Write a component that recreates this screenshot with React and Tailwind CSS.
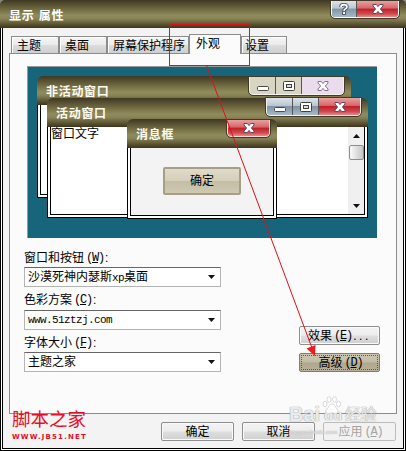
import clsx from "clsx";

const bar =
  "bg-[linear-gradient(180deg,#3f3823_0%,#5a5334_18%,#7b7548_40%,#8f8b5e_55%,#898557_66%,#655f3a_82%,#3d331c_100%)]";
const red =
  "bg-[linear-gradient(180deg,#e9a0a0_0%,#d96468_45%,#bd2028_50%,#d04a50_80%,#ef8585_100%)]";
const blue =
  "bg-[linear-gradient(180deg,#dde4ea_0%,#b9c6d1_45%,#8194a4_50%,#a8bac8_100%)]";

const CloseGlyph = ({ stroke = "#5c4a5e" }) => (
  <svg width="12" height="10" viewBox="0 0 12 10">
    <path
      d="M1 .5h3.3L6 2.6 7.7.5H11V2L8.4 5 11 8v1.5H7.7L6 7.4 4.3 9.5H1V8l2.6-3L1 2z"
      fill="#fff"
      stroke={stroke}
    />
  </svg>
);

const MinGlyph = () => (
  <svg width="12" height="10" viewBox="0 0 12 10">
    <rect x=".5" y="5.5" width="11" height="4" rx="1" fill="#fff" stroke="#4a4a45" />
  </svg>
);

const MaxGlyph = () => (
  <svg width="12" height="10" viewBox="0 0 12 10">
    <rect x=".5" y=".5" width="11" height="9" rx="1" fill="#fff" stroke="#3f3f3c" />
    <rect x="3.5" y="3.5" width="5" height="3" fill="#ddd" stroke="#3f3f3c" />
  </svg>
);

const Triangle = ({ up = false }) => (
  <svg width="7" height="4" viewBox="0 0 7 4" className={clsx("shrink-0", up && "rotate-180")}>
    <path d="M0 0h7L3.5 4z" fill="#111" />
  </svg>
);

const Controls = ({ inactive = false }) => (
  <div
    className={clsx(
      "flex h-[18px] w-[95px] overflow-hidden rounded-b-[4px] border border-t-0 border-[#f4f1ee] outline outline-[#403a28]",
      inactive ? "bg-[#d8d5c3]" : blue
    )}>
    <div className="flex w-[26px] items-center justify-center border-r border-[#555]">
      <MinGlyph />
    </div>
    <div className="flex w-[26px] items-center justify-center border-r border-[#555]">
      <MaxGlyph />
    </div>
    <div className={clsx("flex flex-1 items-center justify-center", inactive ? "bg-[#eadced]" : red)}>
      <CloseGlyph stroke={inactive ? "#85738b" : "#5c4a5e"} />
    </div>
  </div>
);

const Tab = ({ children, className }) => (
  <div
    className={clsx(
      "h-[17px] whitespace-nowrap border border-b-0 border-[#8c8c8c] bg-[linear-gradient(180deg,#f5f5f5_0%,#ebebeb_48%,#dcdcdc_52%,#cfcfcf_100%)] leading-[18px] shadow-[inset_1px_1px_#fff]",
      className
    )}>
    {children}
  </div>
);

const Latin = ({ children }) => (
  <span className="font-['Liberation_Mono',monospace] text-[11px] tracking-[-0.6px]">
    {children}
  </span>
);

const Key = ({ children }) => (
  <span className="ml-[2px] mr-[-2px] font-['Liberation_Mono',monospace] text-[12px] tracking-[-1.2px]">
    (<u>{children}</u>)
  </span>
);

const Field = ({ label, hotkey, children }) => (
  <div>
    <div className="flex h-[18px] items-center whitespace-nowrap pb-[1px]">
      {label}
      <Key>{hotkey}</Key>
      <span className="ml-[3px]">:</span>
    </div>
    <div className="flex h-[20px] w-[197px] items-center justify-between border border-[#b4b4b4] border-t-[#666] bg-white pl-[3px] pr-[5px]">
      <span className="whitespace-nowrap leading-[16px]">{children}</span>
      <Triangle />
    </div>
  </div>
);

const Button = ({ children, className }) => (
  <button
    className={clsx(
      "flex h-[19px] items-center justify-center whitespace-nowrap rounded-[2px] border leading-none",
      className
    )}>
    {children}
  </button>
);

const normal =
  "border-[#8e8e8e] bg-[linear-gradient(180deg,#f4f4f4_0%,#ededed_48%,#dedede_52%,#d0d0d0_100%)] shadow-[inset_0_0_0_1px_#fafafa]";

const MiniWindow = ({ title, className, bodyClass, children }) => (
  <div className={clsx("absolute flex flex-col", className)}>
    <div className={clsx("h-[29px] shrink-0 rounded-t-[6px] pl-[9px] pt-[8px]", bar)}>
      <span className="block text-[12px] font-bold leading-[16px] tracking-[0.7px] text-[#fdfbf0]">
        {title}
      </span>
    </div>
    <div className="flex flex-1 border border-t-0 border-black bg-white px-[2px] pb-[2px]">
      <div className={clsx("flex flex-1 border border-t-0 border-black", bodyClass)}>
        {children}
      </div>
    </div>
  </div>
);

const Preview = () => (
  <div className="relative h-[172px] w-[350px] overflow-hidden border-l border-t border-[#999] bg-[#16657a]">
    <MiniWindow title="非活动窗口" className="left-[9px] top-[9px] h-[122px] w-[314px]" />
    <div className="absolute left-[221px] top-[10px]">
      <Controls inactive />
    </div>

    <MiniWindow
      title="活动窗口"
      className="left-[19px] top-[31px] h-[120px] w-[321px]"
      bodyClass="justify-between">
      <span className="leading-[15px]">窗口文字</span>
      <div className="flex w-[16px] flex-col items-center bg-[#f0f0f0] pb-[6px] pt-[7px]">
        <Triangle up />
        <div className="mt-[7px] h-[15px] w-[15px] shrink-0 rounded-[2px] border border-[#8d8d8d] bg-[linear-gradient(90deg,#fafafa,#c4c4c4)]" />
        <div className="flex-1" />
        <Triangle />
      </div>
    </MiniWindow>
    <div className="absolute left-[238px] top-[31px]">
      <Controls />
    </div>

    <MiniWindow
      title="消息框"
      className="left-[99px] top-[52px] h-[100px] w-[150px]"
      bodyClass="justify-center bg-[#f3f3f3] pt-[19px]">
      <div className="flex h-[28px] w-[78px] items-center justify-center rounded-[2px] border-2 border-[#a79e85] bg-[linear-gradient(180deg,#dfdaca_0%,#d5cfba_48%,#c5bea5_52%,#cfc8b2_100%)]">
        确定
      </div>
    </MiniWindow>
    <div
      className={clsx(
        "absolute left-[199px] top-[53px] flex h-[17px] w-[43px] items-center justify-center rounded-b-[4px] border border-t-0 border-[#f4d8d8] outline outline-[#403a28]",
        red
      )}>
      <CloseGlyph />
    </div>
  </div>
);

const Watermark = () => (
  <div className="pointer-events-none absolute left-[289px] top-[396px] w-[96px] text-white/80 [text-shadow:0_0_1px_#999,0_0_1px_#aaa]">
    <svg width="20" height="18" viewBox="0 0 20 18" className="absolute left-[33px] top-0">
      <g fill="#fff" fillOpacity=".85" stroke="#cfcfcf" strokeWidth=".8">
        <ellipse cx="3" cy="8" rx="2" ry="2.8" />
        <ellipse cx="7" cy="3.5" rx="2" ry="2.8" />
        <ellipse cx="12.5" cy="3.5" rx="2" ry="2.8" />
        <ellipse cx="16.5" cy="8" rx="2" ry="2.8" />
        <path d="M10 8c3 0 3 3 5 5s1 4.500-1 4.500-2.500-.5-4-.5-2 .5-4 .5-3-2.500-1-4.500 2-5 5-5z" />
      </g>
    </svg>
    <div className="flex h-[28px] items-end pb-px leading-[17px]">
      <span className="w-[35px] text-[20px] font-bold">Bai</span>
      <span className="w-[21px] text-[15px] font-bold">du</span>
      <span className="whitespace-nowrap text-[16px] tracking-[-0.5px]">经验</span>
    </div>
    <div className="mt-[5px] text-[6px] leading-[7px]">jingyan.baidu.com</div>
  </div>
);

// highlight box round the tab and the arrow down to the advanced button
const Pointer = () => (
  <svg width="406" height="451" viewBox="0 0 406 451" className="pointer-events-none absolute left-0 top-0 z-20">
    <rect x="169.5" y="24.5" width="80" height="41" stroke="#e01018" fill="none" />
    <path d="M206.500 65.500 312 348" stroke="#e01018" fill="none" />
    <path d="m306.500 348.500 9-3.500-.5 11z" fill="#ee1c1c" />
  </svg>
);

export default function App() {
  return (
    <div className="relative h-[451px] w-[406px] overflow-hidden bg-white font-['Liberation_Sans','Noto_Sans_CJK_SC',sans-serif] text-[12px] text-black">
      <div className="bg-[#84887e]">
        <header className={clsx("flex h-[28px] items-start justify-between rounded-t-[5px] pl-[9px] pr-[7px]", bar)}>
          <h1 className="pt-[8px] text-[12px] font-bold leading-[16px] tracking-[0.8px] text-white">显示 属性</h1>
          <div className="mt-px flex h-[17px] w-[68px] overflow-hidden rounded-b-[4px] border border-t-0 border-white outline outline-[#403a28]">
            <div className={clsx("flex w-[25px] items-center justify-center border-r border-[#555]", blue)}>
              <svg width="10" height="12" viewBox="0 0 10 12">
                <path d="M2 4C2 .8 8 .8 8 4 8 5.800 5 5.500 5 8" fill="none" stroke="#555e6a" strokeWidth="3.6" />
                <path d="M2 4C2 .8 8 .8 8 4 8 5.800 5 5.500 5 8" fill="none" stroke="#fff" strokeWidth="1.6" />
                <rect x="3.5" y="8.5" width="3" height="3" fill="#fff" stroke="#555e6a" />
              </svg>
            </div>
            <div className={clsx("flex flex-1 items-center justify-center", red)}>
              <CloseGlyph />
            </div>
          </div>
        </header>
      </div>

      <div className="h-[423px] border border-t-0 border-black bg-white px-px pb-px">
        <main className="h-full border border-t-0 border-black bg-[#f3f3f3] px-[6px] pt-[6px]">
          <div className="ml-[2px] flex h-[19px] items-end">
            <Tab className="w-[48px] pl-[5px]">主题</Tab>
            <Tab className="w-[48px] pl-[5px]">桌面</Tab>
            <Tab className="w-[82px] pl-[5px]">屏幕保护程序</Tab>
            <div className="relative z-10 -mb-px h-[20px] w-[52px] border border-b-0 border-[#8c8c8c] bg-[#fbfbfb] pl-[6px] leading-[19px]">
              外观
            </div>
            <Tab className="w-[46px] pl-[3px]">设置</Tab>
          </div>

          <section className="h-[361px] w-[388px] border border-[#8c8c8c] bg-[#fbfbfb] pl-[17px] pr-[16px] pt-[12px]">
            <Preview />
            <div className="-ml-[3px] mt-[11px] flex justify-between">
              <div className="flex flex-col gap-[4.5px]">
                <Field label="窗口和按钮" hotkey="W">
                  沙漠死神内瑟斯<Latin>xp</Latin>桌面
                </Field>
                <Field label="色彩方案" hotkey="C">
                  <Latin>www.51ztzj.com</Latin>
                </Field>
                <Field label="字体大小" hotkey="F">
                  主题之家
                </Field>
              </div>
              <div className="flex w-[81px] flex-col gap-[8px] pt-[77px]">
                <Button className={normal}>
                  效果<Key>E</Key>
                  <span className="ml-[3px] tracking-[2.6px]">...</span>
                </Button>
                <Button className="border-[#857c62] bg-[linear-gradient(180deg,#cdc7b3_0%,#c2bba4_48%,#aea78e_52%,#b9b29b_100%)] p-px">
                  <span className="flex h-full w-full items-center justify-center border border-dotted border-[#5d573f]">
                    高级<Key>D</Key>
                  </span>
                </Button>
              </div>
            </div>
          </section>

          <footer className="mt-[8px] flex items-start gap-[8px]">
            <div className="relative z-10 -mt-[12px] ml-[3px] w-[141px] text-[#e2102a]">
              <div className="text-[18.5px] leading-[20px]">脚本之家</div>
              <div className="pt-[3px] font-['DejaVu_Sans',sans-serif] text-[7px] font-bold leading-[8px] tracking-[1.15px]">
                WWW.JB51.NET
              </div>
            </div>
            <Button className={clsx("w-[73px]", normal)}>确定</Button>
            <Button className={clsx("w-[73px]", normal)}>取消</Button>
            <Button className="w-[73px] border-[#bcbcbc] bg-[#f2f2f2] text-[#a3a3a3]">
              应用<Key>A</Key>
            </Button>
          </footer>
        </main>
      </div>

      <Watermark />
      <Pointer />
    </div>
  );
}
